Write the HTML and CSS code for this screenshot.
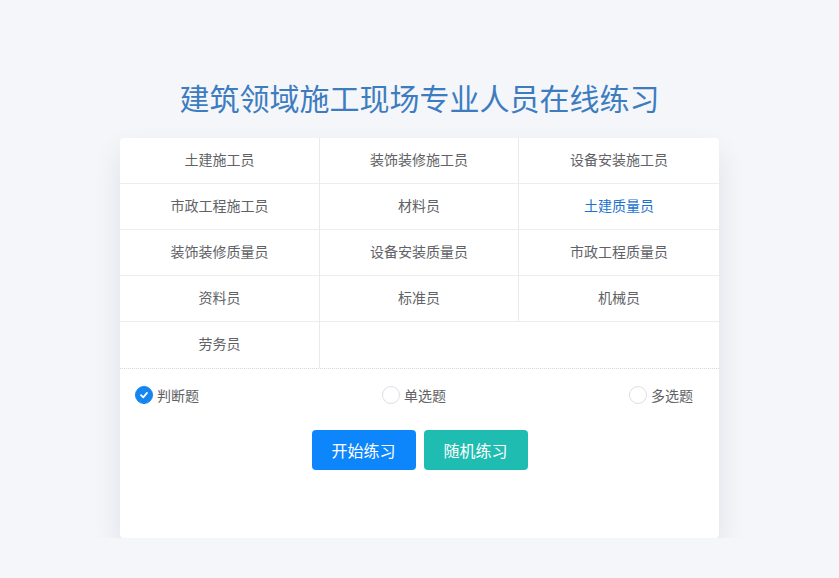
FILE: index.html
```html
<!DOCTYPE html>
<html lang="zh-CN">
<head>
    <meta charset="UTF-8">
    <meta name="viewport" content="width=device-width, initial-scale=1.0">
    <link rel="stylesheet" href="styles.css">
</head>
<body>
    <h1 class="titulo">建筑领域施工现场专业人员在线练习</h1>
    <div class="cartao">
        <div class="grade">
            <div class="celula">土建施工员</div>
            <div class="celula">装饰装修施工员</div>
            <div class="celula">设备安装施工员</div>
            <div class="celula">市政工程施工员</div>
            <div class="celula">材料员</div>
            <div class="celula ativa">土建质量员</div>
            <div class="celula">装饰装修质量员</div>
            <div class="celula">设备安装质量员</div>
            <div class="celula">市政工程质量员</div>
            <div class="celula">资料员</div>
            <div class="celula">标准员</div>
            <div class="celula">机械员</div>
            <div class="celula">劳务员</div>
        </div>
        <div class="tipos">
            <label class="radio marcado"><span class="bolinha"><svg width="10" height="10" viewBox="0 0 10 10"><path d="M2 5.2 L4.2 7.3 L8 2.9" fill="none" stroke="#fff" stroke-width="1.8" stroke-linecap="round" stroke-linejoin="round"/></svg></span>判断题</label>
            <label class="radio"><span class="bolinha"></span>单选题</label>
            <label class="radio"><span class="bolinha"></span>多选题</label>
        </div>
        <div class="botoes">
            <button class="btn azul">开始练习</button>
            <button class="btn verde">随机练习</button>
        </div>
    </div>
</body>
</html>
```

FILE: styles.css
```css
* {
    margin: 0;
    padding: 0;
    box-sizing: border-box;
}

body {
    font-family: "Noto Sans CJK SC", "Noto Sans", sans-serif;
    background-color: #f4f6fa;
    padding-top: 77px;
    color: #606266;
}

.titulo {
    text-align: center;
    font-size: 30px;
    line-height: 40px;
    font-weight: normal;
    color: #3d7dbf;
    margin-bottom: 21px;
}

.cartao {
    width: 599px;
    height: 400px;
    margin: 0 auto;
    background-color: #ffffff;
    border-radius: 4px;
    box-shadow: 0 14px 30px rgba(0, 0, 30, 0.09);
}

.grade {
    display: grid;
    grid-template-columns: 200px 199px 200px;
    border-bottom: 1px dotted #d8d8d8;
}

.celula {
    height: 46px;
    line-height: 43px;
    text-align: center;
    font-size: 14px;
    color: #606266;
    border-right: 1px solid #e9e9e9;
    border-bottom: 1px solid #ededed;
}

.celula:nth-child(3n) {
    border-right: none;
}

.celula:last-child {
    border-bottom: none;
}

.celula.ativa {
    color: #1a73d0;
}

.tipos {
    display: flex;
    justify-content: space-between;
    align-items: center;
    padding: 16px 26px 0 15px;
}

.radio {
    display: flex;
    align-items: center;
    font-size: 14px;
    line-height: 20px;
    color: #606266;
}

.bolinha {
    width: 18px;
    height: 18px;
    border-radius: 50%;
    border: 1px solid #dcdfe6;
    margin-right: 4px;
    display: flex;
    align-items: center;
    justify-content: center;
    background-color: #fff;
}

.marcado .bolinha {
    background-color: #1585f0;
    border-color: #1585f0;
}

.botoes {
    display: flex;
    justify-content: center;
    gap: 8px;
    margin-top: 25px;
}

.btn {
    width: 104px;
    height: 40px;
    border: none;
    border-radius: 4px;
    color: #fff;
    font-family: inherit;
    font-size: 16px;
    cursor: pointer;
}

.azul {
    background-color: #0d86fc;
}

.verde {
    background-color: #1fbcb1;
}
```
